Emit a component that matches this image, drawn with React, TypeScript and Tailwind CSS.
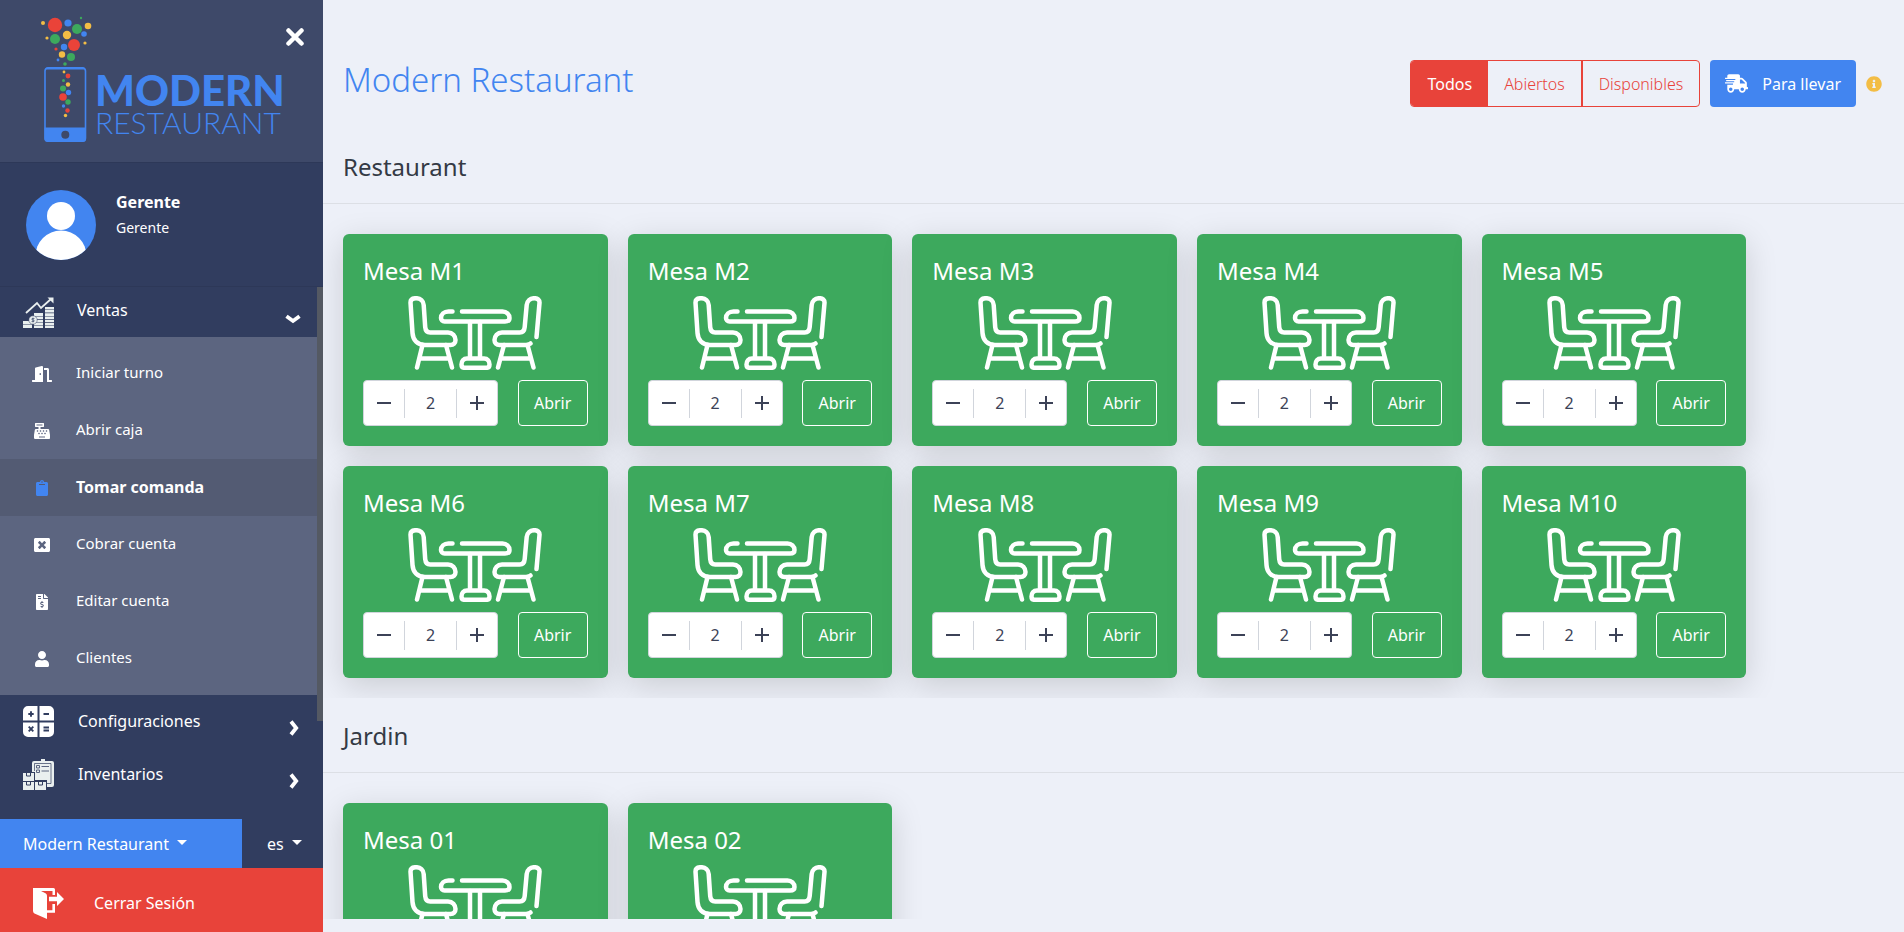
import type { ReactNode } from 'react';
import {
  FaCashRegister,
  FaClipboard,
  FaDoorOpen,
  FaFileInvoiceDollar,
  FaInfoCircle,
  FaShippingFast,
  FaUser,
  FaWindowClose,
} from 'react-icons/fa';

type Table = { id: string; name: string };
type Area = { name: string; tables: Table[] };
type SubItem = { label: string; icon: ReactNode; active?: boolean };

const AREAS: Area[] = [
  {
    name: 'Restaurant',
    tables: Array.from({ length: 10 }, (_, i) => ({ id: `m${i + 1}`, name: `Mesa M${i + 1}` })),
  },
  {
    name: 'Jardin',
    tables: [
      { id: 'j1', name: 'Mesa 01' },
      { id: 'j2', name: 'Mesa 02' },
    ],
  },
];

const SALES_ITEMS: SubItem[] = [
  { label: 'Iniciar turno', icon: <FaDoorOpen className="h-4 w-5" /> },
  { label: 'Abrir caja', icon: <FaCashRegister className="size-4" /> },
  { label: 'Tomar comanda', icon: <FaClipboard className="size-4 text-[#4285f0]" />, active: true },
  { label: 'Cobrar cuenta', icon: <FaWindowClose className="size-4" /> },
  { label: 'Editar cuenta', icon: <FaFileInvoiceDollar className="size-4" /> },
  { label: 'Clientes', icon: <FaUser className="size-4" /> },
];

// cx, cy, r, color
const BUBBLES: [number, number, number, string][] = [
  [55, 25, 7.2, '#ea4339'],
  [68, 23, 3.6, '#4285f0'],
  [43, 23, 2, '#f3bd45'],
  [81, 18, 1.2, '#3da95d'],
  [77, 29, 5, '#3da95d'],
  [88, 26, 3.3, '#f3bd45'],
  [67, 35, 4.2, '#f3bd45'],
  [84, 34, 2.8, '#4285f0'],
  [47, 38, 1.6, '#f3bd45'],
  [55, 39, 5, '#3da95d'],
  [74, 45, 6, '#ea4339'],
  [85, 43, 1.6, '#f3bd45'],
  [64, 47, 3.2, '#4285f0'],
  [56, 49, 1.6, '#ea4339'],
  [62, 54.5, 3.2, '#f3bd45'],
  [71, 57, 4, '#3da95d'],
  [58, 60, 1.4, '#4285f0'],
  [65, 64, 1.8, '#3da95d'],
  [64, 72, 1.4, '#f3bd45'],
  [68, 76, 2.4, '#ea4339'],
  [63.5, 80.5, 1.5, '#3da95d'],
  [68, 84.5, 2.2, '#f3bd45'],
  [63, 88.5, 3, '#3da95d'],
  [68.5, 92.5, 2.7, '#4285f0'],
  [63, 97, 3.8, '#ea4339'],
  [68, 102, 2.7, '#3da95d'],
  [63.5, 106, 1.7, '#4285f0'],
  [67.5, 110.5, 2.2, '#ea4339'],
  [65.5, 115.5, 1.7, '#f3bd45'],
];

const Logo = () => (
  <svg viewBox="36 14 250 130" className="h-[130px] w-[250px]" role="img" aria-label="Modern Restaurant">
    <rect x="45" y="68" width="40.5" height="73" rx="3" fill="none" stroke="#4285f0" strokeWidth="1.6" />
    <path d="M45 69.5a3 3 0 0 1 3-2.5h34a3 3 0 0 1 3.500 2.500z" fill="#4285f0" />
    <path
      fillRule="evenodd"
      d="M44.500 127.500h41.500v11.500a3 3 0 0 1-3 3h-35.500a3 3 0 0 1-3-3zM65.300 130.800a4 4 0 1 0 0 8a4 4 0 1 0 0-8z"
      fill="#4285f0"
    />
    {BUBBLES.map(([cx, cy, r, fill]) => (
      <circle key={`${cx}-${cy}`} cx={cx} cy={cy} r={r} fill={fill} />
    ))}
    <text x="95" y="106" fill="#4285f0" className="font-['Lato'] text-[42px] font-black">
      MODERN
    </text>
    <text x="95" y="134" fill="#4285f0" className="font-['Lato'] text-[30px] font-light">
      RESTAURANT
    </text>
  </svg>
);

const CloseIcon = () => (
  <svg viewBox="0 0 18 18" className="size-[18px]" stroke="currentColor" strokeWidth="4.500" strokeLinecap="round">
    <path d="M2.500 2.500l13 13M15.500 2.500l-13 13" />
  </svg>
);

const ChevronDown = () => (
  <svg viewBox="0 0 16 10" className="mt-3.5 h-2.5 w-4" fill="none" stroke="currentColor" strokeWidth="3.800">
    <path d="M1.500 2.200L8 7l6.500-4.800" />
  </svg>
);

const ChevronRight = () => (
  <svg viewBox="0 0 10 16" className="mt-3 mr-0.5 h-4 w-2.5" fill="none" stroke="currentColor" strokeWidth="3.800">
    <path d="M2 1.500L7.200 8 2 14.500" />
  </svg>
);

const SalesIcon = () => (
  <svg viewBox="0 0 31 31" className="size-[31px]" fill="#e9efef">
    <path d="M3 16l11-10 4 5L28 2" fill="none" stroke="#e9efef" strokeWidth="1.800" />
    <path d="M24.500 0.500h6v6z" />
    <path d="M0 24h9v3H0zM0 27.500h9V31H0zM11 16h9v3h-9zM12 19.500h8v2.800h-8zM13 23h7v2.500h-7zM11 26h9v2.200h-9zM11 28.800h9V31h-9zM22 10h9v2.500h-9zM22 13h9v2.500h-9zM22 16.300h9v2.700h-9zM22 19.600h9v2.500h-9zM22 22.800h9v2.500h-9zM22 26h9v2.200h-9zM22 28.800h9V31h-9z" />
    <circle cx="10" cy="23" r="4.200" stroke="#313d5f" strokeWidth=".5" />
    <path d="M11.500 21.500h-2.500v1.500h2v1.500H8.500M10 20.500v5" fill="none" stroke="#313d5f" strokeWidth=".6" />
  </svg>
);

const SettingsIcon = () => (
  <svg viewBox="0 0 31 31" className="size-[31px]">
    <path
      d="M5 0h9.500v14.500H0V5a5 5 0 0 1 5-5zM16.500 0H26a5 5 0 0 1 5 5v9.500H16.500zM0 16.500h14.500V31H5a5 5 0 0 1-5-5zM16.500 16.500H31V26a5 5 0 0 1-5 5h-9.500z"
      fill="#fff"
    />
    <path
      d="M8 5.300v5.400M5.300 8h5.400M20.500 8H26M5.700 20.700l4.600 4.600M10.300 20.700l-4.600 4.600M20.500 21.500H26M20.500 24.500H26"
      stroke="#313d5f"
      strokeWidth="1.900"
    />
  </svg>
);

const InventoryIcon = () => (
  <svg viewBox="0 0 31 31" className="size-[31px]" fill="#e9efef">
    <path d="M18 0h4v2h7a2 2 0 0 1 2 2v22a2 2 0 0 1-2 2h-5v-7H12v-8H9V4a2 2 0 0 1 2-2h7z" />
    <path d="M11.500 12V4.500h16.500v20H24" fill="none" stroke="#313d5f" strokeWidth=".7" />
    <path d="M13.500 6.500h3v2.500h-3zM13.500 11h3v2.500h-3zM18.500 7.500H26M18.500 12H26" fill="none" stroke="#5a6580" strokeWidth="1" />
    <path d="M0 14h11v8H0zM0 23h11v8H0zM12 23h11v8H12z" />
    <path d="M3.500 14v3h4v-3M3.500 23v3h4v-3M15.500 23v3h4v-3" fill="none" stroke="#313d5f" strokeWidth="1" />
  </svg>
);

const LogoutIcon = () => (
  <svg viewBox="0 0 31 31" className="size-[31px]">
    <path d="M0 0h20.500a1.500 1.500 0 0 1 1.500 1.500V7h-2.500V3H8l4.500 2.300a3 3 0 0 1 1.500 2.500V31L1.500 25.500A3 3 0 0 1 0 23z" fill="#fff" />
    <path d="M13 23.500h7.700V16" fill="none" stroke="#fff" strokeWidth="2.600" />
    <path d="M16 8.800h8V4L31 11l-7 7v-4.800h-8z" fill="#fff" />
  </svg>
);

const DiningTable = () => (
  <svg
    viewBox="0 0 134 74"
    className="h-[74px] w-[134px]"
    fill="none"
    stroke="#fff"
    strokeWidth="4.500"
    strokeLinecap="round"
    strokeLinejoin="round"
  >
    <path d="M2.500 6.500C2.500 3.500 4.500 2.200 8 2.200c4.500 0 7.500 2.800 7.700 6.800l1.500 22c.3 3.500 2 5.500 5 5.500H40c4.500 0 7.500 3.500 7.500 7.500 0 3-2 5-5 5H17C9.500 49 5 44 4.500 37z" />
    <path d="M14.500 49L9 71.500M38 49l6 22.500M13 62.500h28" />
    <path d="M44.500 15.500h-4c-4.500 0-7.500 3-7.500 6.500 0 2 1.500 3.500 3.500 3.500H97c2.500 0 4.500-1 4.500-3.500 0-3.500-3-6.500-7-6.500H54" />
    <path d="M62 26v36M72 26v36M59 62.500h17c3.500 0 5.500 2.500 5.500 6 0 2-1 3.300-3 3.300h-22c-2 0-3-1.300-3-3.300 0-3.500 2-6 5.500-6z" />
    <path d="M128.500 41L131.500 7c.3-3-2-4.800-5-4.800-4.500 0-7.500 2.800-7.800 6.800l-2 22c-.3 3.500-2 5.500-5 5.500H94c-4.500 0-7.500 3.500-7.500 7.500 0 3 2 5 5 5H118c1.800 0 3.200-.5 4.500-1.500" />
    <path d="M96 49l-6 22.500M119.500 49l6 22.500M94 62.500h28" />
  </svg>
);

const Caret = () => (
  <svg viewBox="0 0 10 5" className="mb-0.5 h-[5px] w-2.5 shrink-0" fill="currentColor">
    <path d="M0 0h10L5 5z" />
  </svg>
);

const Sidebar = () => (
  <aside className="flex w-[323px] shrink-0 flex-col bg-[#313d5f] text-white">
    <div className="flex h-[163px] shrink-0 items-start border-b border-[#2d3858] bg-[#3e4969] pt-3.5 pl-9">
      <Logo />
      <button type="button" aria-label="Cerrar menú" className="shrink-0 pt-3.5">
        <CloseIcon />
      </button>
    </div>

    <div className="flex h-[124px] shrink-0 gap-5 border-b border-[#2d3858] pt-[27px] pl-[26px]">
      <svg viewBox="0 0 70 70" className="size-[70px]">
        <clipPath id="avatar">
          <circle cx="35" cy="35" r="35" />
        </clipPath>
        <g clipPath="url(#avatar)">
          <rect width="70" height="70" fill="#4285f0" />
          <circle cx="35" cy="26" r="14" fill="#fff" />
          <circle cx="35" cy="66" r="25.500" fill="#fff" />
        </g>
      </svg>
      <div className="flex flex-col">
        <span className="text-base leading-6 font-bold">Gerente</span>
        <span className="mt-0.5 text-sm leading-6">Gerente</span>
      </div>
    </div>

    <nav className="flex min-h-0 flex-1 items-start overflow-hidden">
      <div className="flex-1">
        <button type="button" className="flex h-[50px] w-full items-center gap-[23px] pr-4 pl-[23px]">
          <SalesIcon />
          <span className="flex-1 pb-1 text-left text-base">Ventas</span>
          <ChevronDown />
        </button>
        <ul className="bg-[#5c6580] py-2">
          {SALES_ITEMS.map((item) => (
            <li key={item.label}>
              <a
                href="#"
                className={`flex h-[57px] items-center gap-6 pl-8 ${
                  item.active ? 'bg-[#535b73] text-base font-bold' : 'text-[15px]'
                }`}
              >
                <span className="flex w-5 justify-center">{item.icon}</span>
                <span className="pb-0.5">{item.label}</span>
              </a>
            </li>
          ))}
        </ul>
        <button type="button" className="flex h-[53px] w-full items-center gap-6 pr-4 pl-[23px]">
          <SettingsIcon />
          <span className="flex-1 pb-0.5 text-left text-base">Configuraciones</span>
          <ChevronRight />
        </button>
        <button type="button" className="flex h-[53px] w-full items-center gap-6 pr-4 pl-[23px]">
          <InventoryIcon />
          <span className="flex-1 pb-0.5 text-left text-base">Inventarios</span>
          <ChevronRight />
        </button>
      </div>
      <div className="h-[434px] w-1.5 bg-[#545963]" />
    </nav>

    <div className="flex h-[49px] shrink-0 text-base">
      <button type="button" className="flex w-[242px] items-center gap-2 bg-[#4285f0] pl-[23px]">
        Modern Restaurant <Caret />
      </button>
      <button type="button" className="flex flex-1 items-center gap-2 pl-[25px]">
        es <Caret />
      </button>
    </div>
    <a href="#" className="flex h-16 shrink-0 items-center gap-[30px] bg-[#e8433a] pt-1.5 pl-[33px] text-base">
      <LogoutIcon />
      Cerrar Sesión
    </a>
  </aside>
);

const TableCard = ({ table }: { table: Table }) => (
  <div className="rounded-md bg-[#3da95d] p-5 text-white shadow-[0_8px_32px_rgba(0,0,0,0.15)]">
    <h3 className="text-2xl leading-[34px]">{table.name}</h3>
    <div className="mt-2 flex justify-center">
      <DiningTable />
    </div>
    <div className="mt-2.5 flex h-[46px] justify-between">
      <div className="flex w-[135px] items-center rounded border border-gray-300 bg-white text-[#3c4257]">
        <button type="button" aria-label="Menos" className="flex flex-1 justify-center">
          <svg viewBox="0 0 14 14" className="size-3.5" stroke="currentColor" strokeWidth="2">
            <path d="M0 7h14" />
          </svg>
        </button>
        <input
          aria-label={`Personas ${table.name}`}
          defaultValue="2"
          className="h-[29px] w-[53px] border-x border-gray-300 text-center text-base"
        />
        <button type="button" aria-label="Más" className="flex flex-1 justify-center">
          <svg viewBox="0 0 14 14" className="size-3.5" stroke="currentColor" strokeWidth="2">
            <path d="M0 7h14M7 0v14" />
          </svg>
        </button>
      </div>
      <button type="button" className="w-[70px] rounded border border-white text-base">
        Abrir
      </button>
    </div>
  </div>
);

export default function App() {
  return (
    <div className="flex h-screen bg-[#edf0f8] font-['Noto_Sans',sans-serif] text-[#343a45]">
      <Sidebar />

      <main className="mb-[13px] min-w-0 flex-1 overflow-hidden">
        <header className="flex items-start justify-between pt-[60px] pr-[22px] pl-5">
          <h1 className="text-[33px] leading-10 font-light text-[#4285f0]">Modern Restaurant</h1>
          <div className="flex items-center gap-2.5">
            <div className="flex h-[47px] overflow-hidden rounded border border-[#e8433a] text-base text-[#e8433a]">
              <button type="button" className="bg-[#e8433a] px-4 text-white">
                Todos
              </button>
              <button type="button" className="px-4 font-light">
                Abiertos
              </button>
              <button type="button" className="border-l-2 border-[#e8433a] px-4 font-light">
                Disponibles
              </button>
            </div>
            <button type="button" className="flex h-[47px] items-center gap-3.5 rounded bg-[#4285f0] px-[15px] text-base text-white">
              <FaShippingFast className="size-[23px]" />
              Para llevar
            </button>
            <FaInfoCircle className="size-4 text-[#f3bd45]" />
          </div>
        </header>

        {AREAS.map((area) => (
          <section key={area.name} className="mt-5 first-of-type:mt-[42px]">
            <h2 className="border-b border-[#dcdfe5] px-5 pb-[18px] text-2xl leading-9">{area.name}</h2>
            <div className="flex flex-wrap overflow-hidden pt-5 pr-[9.35%] pb-2.5 pl-2.5">
              {area.tables.map((table) => (
                <div key={table.id} className="w-1/5 p-2.5">
                  <TableCard table={table} />
                </div>
              ))}
            </div>
          </section>
        ))}
      </main>
    </div>
  );
}
